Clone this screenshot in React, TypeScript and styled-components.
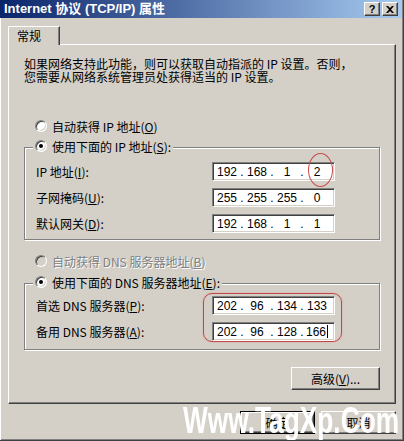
import * as React from "react";
import styled, { createGlobalStyle } from "styled-components";

const GlobalStyle = createGlobalStyle`
  html, body {
    margin: 0;
    padding: 0;
    background: #d4d0c8;
  }
  body {
    font-family: "Noto Sans CJK SC", "Liberation Sans", sans-serif;
    font-size: 12px;
    color: #000;
  }
`;

const SWindow = styled.div`
  position: relative;
  box-sizing: border-box;
  width: 404px;
  height: 441px;
  background: #d4d0c8;
  border-right: 1px solid #404040;
  border-bottom: 1px solid #404040;
  box-shadow: inset -1px -1px 0 #808080;
  display: flex;
  flex-direction: column;
  overflow: hidden;
`;

const STitleBar = styled.div`
  height: 18px;
  margin-right: 1px;
  padding: 0 4px 0 4px;
  display: flex;
  align-items: center;
  background: linear-gradient(to right, #0a246a, #a6caf0);
`;

const STitle = styled.div`
  flex: 1;
  color: #fff;
  font-family: "Liberation Sans", "Noto Sans CJK SC", sans-serif;
  font-weight: bold;
  font-size: 13px;
  line-height: 18px;
  white-space: nowrap;
`;

const SCaptionButton = styled.div<{ $gap?: boolean }>`
  box-sizing: border-box;
  width: 16px;
  height: 14px;
  margin-left: ${(p) => (p.$gap ? 2 : 0)}px;
  background: #d4d0c8;
  border-top: 1px solid #fff;
  border-left: 1px solid #fff;
  border-right: 1px solid #404040;
  border-bottom: 1px solid #404040;
  box-shadow: inset -1px -1px 0 #808080;
  display: flex;
  align-items: center;
  justify-content: center;
  font-family: "Liberation Sans", sans-serif;
  font-weight: bold;
  font-size: 11px;
  line-height: 1;
`;

const SBody = styled.div`
  flex: 1;
  display: flex;
  flex-direction: column;
  padding: 8px 0 0 8px;
  box-shadow: inset 1px 0 0 #fff;
`;

const STab = styled.div`
  position: relative;
  z-index: 1;
  box-sizing: border-box;
  width: 52px;
  height: 19px;
  margin-bottom: -1px;
  padding-left: 8px;
  background: #d4d0c8;
  border-top: 1px solid #fff;
  border-left: 1px solid #fff;
  border-right: 1px solid #404040;
  box-shadow: inset -1px 0 0 #808080;
  line-height: 17px;
`;

const SPanel = styled.div`
  box-sizing: border-box;
  width: 388px;
  height: 360px;
  padding: 0 15px;
  border-top: 1px solid #fff;
  border-left: 1px solid #fff;
  border-right: 1px solid #404040;
  border-bottom: 1px solid #404040;
  box-shadow: inset -1px -1px 0 #808080;
  display: flex;
  flex-direction: column;
`;

const SIntro = styled.div`
  margin-top: 12px;
  line-height: 13px;
  white-space: nowrap;
`;

const SRadioRow = styled.div<{ $top?: number; $disabled?: boolean }>`
  display: flex;
  align-items: center;
  height: 16px;
  margin-top: ${(p) => p.$top ?? 0}px;
  margin-left: 11px;
  gap: 5px;
  white-space: nowrap;
  color: ${(p) => (p.$disabled ? "#808080" : "#000")};
  text-shadow: ${(p) => (p.$disabled ? "1px 1px 0 #fff" : "none")};
`;

const SRadio = styled.span<{ $checked?: boolean; $disabled?: boolean }>`
  position: relative;
  box-sizing: border-box;
  width: 12px;
  height: 12px;
  border-radius: 50%;
  background: ${(p) => (p.$disabled ? "#d4d0c8" : "#fff")};
  border: 1px solid;
  border-color: #808080 #fff #fff #808080;
  box-shadow: inset 1px 1px 0 #404040, inset -1px -1px 0 #d4d0c8;
  flex: none;
  &::after {
    content: "";
    display: ${(p) => (p.$checked ? "block" : "none")};
    position: absolute;
    left: 3px;
    top: 3px;
    width: 4px;
    height: 4px;
    border-radius: 50%;
    background: #000;
  }
`;

const SGroup = styled.div<{ $top: number; $bottom: number }>`
  margin-top: ${(p) => p.$top}px;
  padding: 0 0 ${(p) => p.$bottom}px 11px;
  border: 1px solid #808080;
  box-shadow: inset 1px 1px 0 #fff, 1px 1px 0 #fff;
  display: flex;
  flex-direction: column;
`;

const SGroupTitle = styled.div`
  align-self: flex-start;
  display: flex;
  align-items: center;
  gap: 5px;
  height: 16px;
  margin: -10px 0 0 -3px;
  padding: 0 2px;
  background: #d4d0c8;
  white-space: nowrap;
`;

const SRows = styled.div<{ $top: number }>`
  margin-top: ${(p) => p.$top}px;
  display: flex;
  flex-direction: column;
  gap: 7px;
`;

const SField = styled.div`
  display: flex;
  align-items: center;
  height: 19px;
`;

const SFieldLabel = styled.span`
  width: 176px;
  white-space: nowrap;
`;

const SIpBox = styled.div`
  box-sizing: border-box;
  width: 123px;
  height: 19px;
  padding-left: 2px;
  background: #fff;
  border: 1px solid;
  border-color: #808080 #fff #fff #808080;
  box-shadow: inset 1px 1px 0 #404040, inset -1px -1px 0 #d4d0c8;
  display: flex;
  align-items: center;
  font-family: "Liberation Sans", sans-serif;
  font-size: 12px;
`;

const SOctet = styled.span`
  width: 24px;
  text-align: center;
`;

const SDot = styled.span`
  width: 6px;
  text-align: center;
`;

const SCaret = styled.span`
  display: inline-block;
  width: 1px;
  height: 13px;
  margin-left: 1px;
  vertical-align: -2px;
  background: #000;
`;

const SButtonBar = styled.div<{ $top: number }>`
  display: flex;
  justify-content: flex-end;
  gap: 6px;
  margin-top: ${(p) => p.$top}px;
`;

const SButton = styled.div<{ $wide?: boolean; $default?: boolean }>`
  box-sizing: border-box;
  width: ${(p) => (p.$wide ? 89 : 75)}px;
  height: 23px;
  background: #d4d0c8;
  border: 1px solid;
  border-color: ${(p) => (p.$default ? "#000" : "#fff #404040 #404040 #fff")};
  box-shadow: ${(p) =>
    p.$default
      ? "inset 1px 1px 0 #fff, inset -1px -1px 0 #404040, inset -2px -2px 0 #808080"
      : "inset -1px -1px 0 #808080"};
  display: flex;
  align-items: center;
  justify-content: center;
  white-space: nowrap;
`;

const SFooter = styled.div`
  width: 388px;
`;

const SCircleMark = styled.div`
  position: absolute;
  left: 308px;
  top: 153px;
  width: 25px;
  height: 34px;
  border: 1px solid #cc4a4a;
  border-radius: 50%;
  box-sizing: border-box;
`;

const SBoxMark = styled.div`
  position: absolute;
  left: 203px;
  top: 293px;
  width: 139px;
  height: 49px;
  box-sizing: border-box;
  border: 1.5px solid #c24646;
  border-radius: 9px;
  box-shadow: 0 0 2px rgba(230, 130, 130, 0.6);
`;

const SWatermark = styled.div`
  position: absolute;
  left: 183px;
  top: 403px;
  font-family: "Liberation Sans", sans-serif;
  font-weight: bold;
  font-size: 36px;
  line-height: 36px;
  color: #fff;
  white-space: nowrap;
  transform: scaleX(0.73);
  transform-origin: left top;
`;

const IpAddress = (props: { value: string; caret?: boolean }) => {
  const parts = props.value.split(".");
  return (
    <SIpBox>
      {parts.map((p, i) => (
        <React.Fragment key={i}>
          {i > 0 && <SDot>.</SDot>}
          <SOctet>
            {p}
            {props.caret && i === 3 && <SCaret />}
          </SOctet>
        </React.Fragment>
      ))}
    </SIpBox>
  );
};

const Field = (props: { label: React.ReactNode; value: string; caret?: boolean }) => (
  <SField>
    <SFieldLabel>{props.label}</SFieldLabel>
    <IpAddress value={props.value} caret={props.caret} />
  </SField>
);

const Close = () => (
  <svg width="8" height="7" viewBox="0 0 8 7">
    <path d="M0 0h2l2 2 2-2h2L5 3.5 8 7H6L4 5 2 7H0l3-3.5z" fill="#000" />
  </svg>
);

export default function App() {
  return (
    <>
      <GlobalStyle />
      <SWindow>
        <STitleBar>
          <STitle>Internet 协议 (TCP/IP) 属性</STitle>
          <SCaptionButton>?</SCaptionButton>
          <SCaptionButton $gap>
            <Close />
          </SCaptionButton>
        </STitleBar>
        <SBody>
          <STab>常规</STab>
          <SPanel>
            <SIntro>
              如果网络支持此功能，则可以获取自动指派的 IP 设置。否则，
              <br />
              您需要从网络系统管理员处获得适当的 IP 设置。
            </SIntro>

            <SRadioRow $top={35}>
              <SRadio />
              <span>
                自动获得 IP 地址(<u>O</u>)
              </span>
            </SRadioRow>

            <SGroup $top={13} $bottom={6}>
              <SGroupTitle>
                <SRadio $checked />
                <span>
                  使用下面的 IP 地址(<u>S</u>):
                </span>
              </SGroupTitle>
              <SRows $top={8}>
                <Field label={<>IP 地址(<u>I</u>):</>} value="192.168.1.2" />
                <Field label={<>子网掩码(<u>U</u>):</>} value="255.255.255.0" />
                <Field label={<>默认网关(<u>D</u>):</>} value="192.168.1.1" />
              </SRows>
            </SGroup>

            <SRadioRow $top={13} $disabled>
              <SRadio $disabled />
              <span>
                自动获得 DNS 服务器地址(<u>B</u>)
              </span>
            </SRadioRow>

            <SGroup $top={14} $bottom={8}>
              <SGroupTitle>
                <SRadio $checked />
                <span>
                  使用下面的 DNS 服务器地址(<u>E</u>):
                </span>
              </SGroupTitle>
              <SRows $top={6}>
                <Field label={<>首选 DNS 服务器(<u>P</u>):</>} value="202.96.134.133" />
                <Field label={<>备用 DNS 服务器(<u>A</u>):</>} value="202.96.128.166" caret />
              </SRows>
            </SGroup>

            <SButtonBar $top={17}>
              <SButton $wide>
                高级(<u>V</u>)...
              </SButton>
            </SButtonBar>
          </SPanel>
          <SFooter>
            <SButtonBar $top={7}>
              <SButton $default>确定</SButton>
              <SButton>取消</SButton>
            </SButtonBar>
          </SFooter>
        </SBody>
        <SCircleMark />
        <SBoxMark />
        <SWatermark>Www.TagXp.Com</SWatermark>
      </SWindow>
    </>
  );
}
